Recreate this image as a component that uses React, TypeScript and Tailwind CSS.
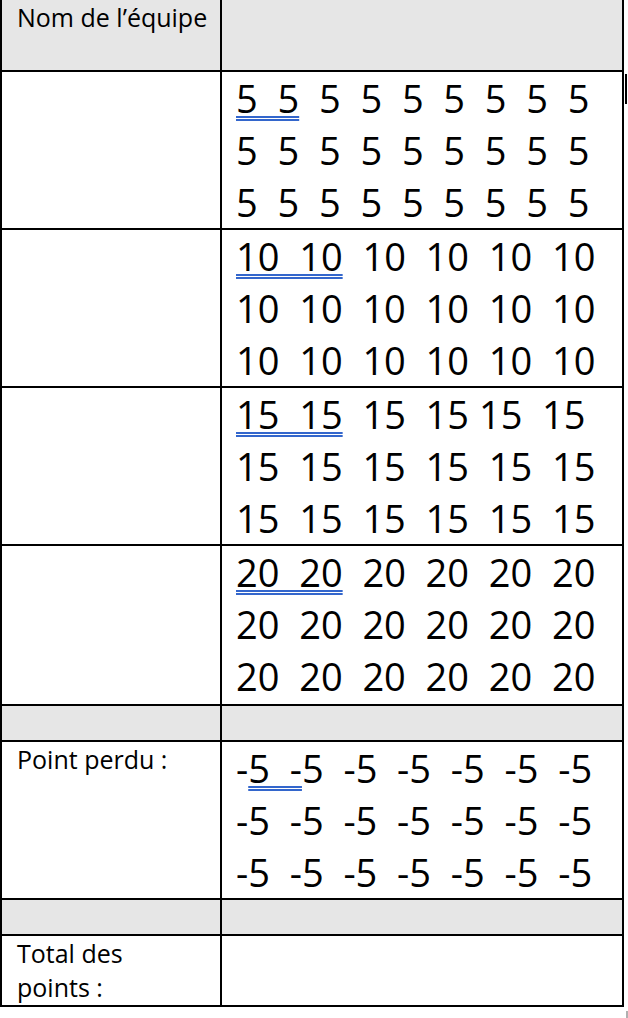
import React from "react";

const U = "underline decoration-double decoration-[#3366cc] decoration-2 underline-offset-[3px]";

type Row = { lines: React.ReactNode[]; h: string };

const rep = (v: string, n: number) => Array(n).fill(v).join("  ");

const rows: Row[] = [
  {
    h: "h-[156px]",
    lines: [
      <><span className={U}>5  5</span>{"  " + rep("5", 7)}</>,
      rep("5", 9),
      rep("5", 9),
    ],
  },
  {
    h: "h-[156px]",
    lines: [
      <><span className={U}>10  10</span>{"  " + rep("10", 4)}</>,
      rep("10", 6),
      rep("10", 6),
    ],
  },
  {
    h: "h-[156px]",
    lines: [
      <><span className={U}>15  15</span>{"  15  15 15  15"}</>,
      rep("15", 6),
      rep("15", 6),
    ],
  },
  {
    h: "h-[158px]",
    lines: [
      <><span className={U}>20  20</span>{"  " + rep("20", 4)}</>,
      rep("20", 6),
      rep("20", 6),
    ],
  },
];

const Numbers = ({ lines, h }: { lines: React.ReactNode[]; h: string }) => (
  <div className={`${h} bg-white pl-[14px] text-[38px] leading-[52px] font-medium whitespace-pre`}>
    {lines.map((l, i) => (
      <div key={i}>{l}</div>
    ))}
  </div>
);

const Label = ({ children, gray, h }: { children?: React.ReactNode; gray?: boolean; h: string }) => (
  <div className={`${h} ${gray ? "bg-[#e6e6e6]" : "bg-white"} pl-[15px] text-[25px] leading-[34px] font-medium`}>{children}</div>
);

export default function App() {
  return (
    <div className="relative w-[628px] h-[1018px] bg-white text-black" style={{ fontFamily: '"Open Sans", sans-serif' }}>
      <div className="w-[624px] bg-black grid grid-cols-[218px_400px] gap-[2px] px-[2px] pb-[2px]">
        {/* en-tête */}
        <Label gray h="h-[70px]">Nom de l’équipe</Label>
        <Label gray h="h-[70px]" />

        {rows.map((r, i) => (
          <React.Fragment key={i}>
            <div className={`bg-white ${r.h}`} />
            <Numbers h={r.h} lines={r.lines} />
          </React.Fragment>
        ))}

        <Label gray h="h-[34px]" />
        <Label gray h="h-[34px]" />

        <Label h="h-[156px]">Point perdu :</Label>
        <Numbers
          h="h-[156px]"
          lines={[
            <>-<span className={U}>5  -</span>{"5  " + rep("-5", 5)}</>,
            rep("-5", 7),
            rep("-5", 7),
          ]}
        />

        <Label gray h="h-[34px]" />
        <Label gray h="h-[34px]" />

        <Label h="h-[69px]">
          Total des
          <br />
          points :
        </Label>
        <Label h="h-[69px]" />
      </div>

      <div className="absolute left-[625px] top-[74px] w-[2px] h-[30px] bg-black" />
      <div className="absolute left-[626px] top-[1011px] w-[2px] h-[7px] bg-[#b0b0b0]" />
    </div>
  );
}
